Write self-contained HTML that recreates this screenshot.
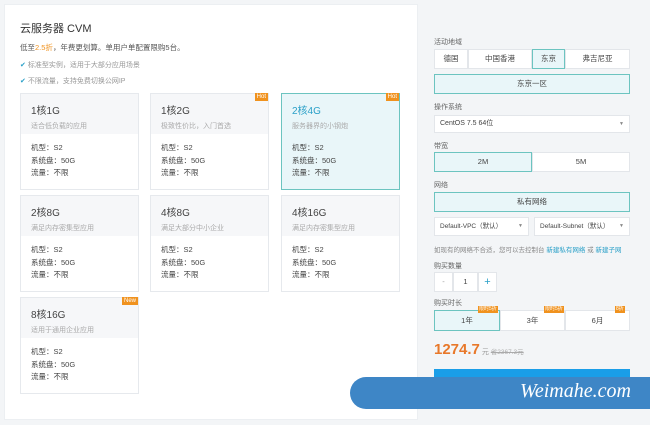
<!DOCTYPE html><html><head><meta charset="utf-8"><style>
*{margin:0;padding:0;box-sizing:border-box}
body{width:650px;height:425px;background:#f3f5f7;font-family:"Liberation Sans","Noto Sans CJK SC",sans-serif;position:relative;overflow:hidden;color:#333}
.a{position:absolute}
.left{left:4px;top:4px;width:414px;height:416px;background:#fff;border:1px solid #eceff2}
.card{position:absolute;width:119px;height:97px;border:1px solid #e6e9ed;background:#fff}
.card .h{height:40px;background:#f6f7f9;padding:8px 10px 0}
.card .t{font-size:10px;color:#444}
.card .s{font-size:7px;color:#aaa;margin-top:4px}
.card .b{padding:8px 10px 0;font-size:7.5px;line-height:12.5px;color:#444}
.sel .h{background:#e9f6f9}.sel{background:#e9f6f9;border-color:#6cc4c0}
.sel .t{color:#2aa0c8}
.tag{position:absolute;right:0;top:-1px;background:#f0921e;color:#fff;font-size:6px;padding:0 2px;line-height:8px}
.lbl{position:absolute;left:434px;font-size:7px;color:#666}
.box{position:absolute;background:#fff;border:1px solid #e3e6ea;font-size:7.5px;color:#444;text-align:center}
.on{background:#e9f6f9;border:1px solid #6cc4c0}
</style></head><body>
<div class="a left"></div>
<div class="a" style="left:20px;top:20px;font-size:11px;color:#333">云服务器 CVM</div>
<div class="a" style="left:20px;top:42px;font-size:7.5px;color:#555">低至<span style="color:#f0921e">2.5折</span>，年费更划算。单用户单配置限购5台。</div>
<div class="a" style="left:20px;top:60px;font-size:7px;color:#999"><span style="color:#2aa0c8">✔</span> 标准型实例，适用于大部分应用场景</div>
<div class="a" style="left:20px;top:76px;font-size:7px;color:#999"><span style="color:#2aa0c8">✔</span> 不限流量，支持免费切换公网IP</div>

<div class="card" style="left:20px;top:93px"><div class="h"><div class="t">1核1G</div><div class="s">适合低负载的应用</div></div><div class="b">机型：S2<br>系统盘：50G<br>流量：不限</div></div>
<div class="card" style="left:150px;top:93px"><div class="tag">Hot</div><div class="h"><div class="t">1核2G</div><div class="s">极致性价比，入门首选</div></div><div class="b">机型：S2<br>系统盘：50G<br>流量：不限</div></div>
<div class="card sel" style="left:281px;top:93px"><div class="tag">Hot</div><div class="h"><div class="t">2核4G</div><div class="s">服务器界的小钢炮</div></div><div class="b">机型：S2<br>系统盘：50G<br>流量：不限</div></div>
<div class="card" style="left:20px;top:195px"><div class="h"><div class="t">2核8G</div><div class="s">满足内存密集型应用</div></div><div class="b">机型：S2<br>系统盘：50G<br>流量：不限</div></div>
<div class="card" style="left:150px;top:195px"><div class="h"><div class="t">4核8G</div><div class="s">满足大部分中小企业</div></div><div class="b">机型：S2<br>系统盘：50G<br>流量：不限</div></div>
<div class="card" style="left:281px;top:195px"><div class="h"><div class="t">4核16G</div><div class="s">满足内存密集型应用</div></div><div class="b">机型：S2<br>系统盘：50G<br>流量：不限</div></div>
<div class="card" style="left:20px;top:297px"><div class="tag">New</div><div class="h"><div class="t">8核16G</div><div class="s">适用于通用企业应用</div></div><div class="b">机型：S2<br>系统盘：50G<br>流量：不限</div></div>

<div class="lbl" style="top:37px">活动地域</div>
<div class="box" style="left:434px;top:49px;width:34px;height:20px;line-height:18px">德国</div>
<div class="box" style="left:468px;top:49px;width:64px;height:20px;line-height:18px">中国香港</div>
<div class="box on" style="left:532px;top:49px;width:33px;height:20px;line-height:18px">东京</div>
<div class="box" style="left:565px;top:49px;width:65px;height:20px;line-height:18px">弗吉尼亚</div>
<div class="box on" style="left:434px;top:74px;width:196px;height:20px;line-height:18px">东京一区</div>
<div class="lbl" style="top:102px">操作系统</div>
<div class="box" style="left:434px;top:115px;width:196px;height:18px;line-height:16px;text-align:left;padding-left:5px;font-size:7px">CentOS 7.5 64位<span style="float:right;margin-right:5px;font-size:5px;color:#888">▼</span></div>
<div class="lbl" style="top:141px">带宽</div>
<div class="box on" style="left:434px;top:152px;width:98px;height:20px;line-height:18px">2M</div>
<div class="box" style="left:532px;top:152px;width:98px;height:20px;line-height:18px">5M</div>
<div class="lbl" style="top:180px">网络</div>
<div class="box on" style="left:434px;top:192px;width:196px;height:20px;line-height:18px">私有网络</div>
<div class="box" style="left:434px;top:217px;width:95px;height:19px;line-height:17px;font-size:6.5px;text-align:left;padding-left:5px">Default-VPC（默认）<span style="float:right;margin-right:5px;font-size:5px;color:#888">▼</span></div>
<div class="box" style="left:534px;top:217px;width:96px;height:19px;line-height:17px;font-size:6.5px;text-align:left;padding-left:5px">Default-Subnet（默认）<span style="float:right;margin-right:5px;font-size:5px;color:#888">▼</span></div>
<div class="lbl" style="top:244px;font-size:6.5px;color:#888">如现有的网络不合适，您可以去控制台 <span style="color:#2aa0c8">新建私有网络</span> 或 <span style="color:#2aa0c8">新建子网</span></div>
<div class="lbl" style="top:261px">购买数量</div>
<div class="box" style="left:434px;top:272px;width:19px;height:20px;line-height:18px;color:#999">-</div>
<div class="box" style="left:453px;top:272px;width:25px;height:20px;line-height:18px">1</div>
<div class="box" style="left:478px;top:272px;width:19px;height:20px;line-height:18px;color:#2aa0c8;font-size:11px">+</div>
<div class="lbl" style="top:298px">购买时长</div>
<div class="box on" style="left:434px;top:310px;width:66px;height:21px;line-height:19px">1年</div>
<div class="box" style="left:500px;top:310px;width:65px;height:21px;line-height:19px">3年</div>
<div class="box" style="left:565px;top:310px;width:65px;height:21px;line-height:19px">6月</div>
<div class="a" style="left:478px;top:306px;background:#f0921e;color:#fff;font-size:5px;line-height:7px;padding:0 1px">限时5折</div>
<div class="a" style="left:544px;top:306px;background:#f0921e;color:#fff;font-size:5px;line-height:7px;padding:0 1px">限时5折</div>
<div class="a" style="left:615px;top:306px;background:#f0921e;color:#fff;font-size:5px;line-height:7px;padding:0 1px">8折</div>
<div class="a" style="left:434px;top:341px;font-size:15px;color:#e8782a;font-weight:bold">1274.7<span style="font-size:7px;color:#999;font-weight:normal"> 元 </span><span style="font-size:6.5px;color:#aaa;font-weight:normal;text-decoration:line-through">省2367.3元</span></div>
<div class="a" style="left:434px;top:369px;width:196px;height:20px;background:#1a9ee8"></div>
<div class="a" style="left:350px;top:377px;width:300px;height:32px;background:#3e86c6;border-radius:16px 0 0 16px"></div>
<div class="a" style="left:520px;top:380px;font-family:'Liberation Serif',serif;font-style:italic;font-size:20px;color:#fff">Weimahe.com</div>
</body></html>
